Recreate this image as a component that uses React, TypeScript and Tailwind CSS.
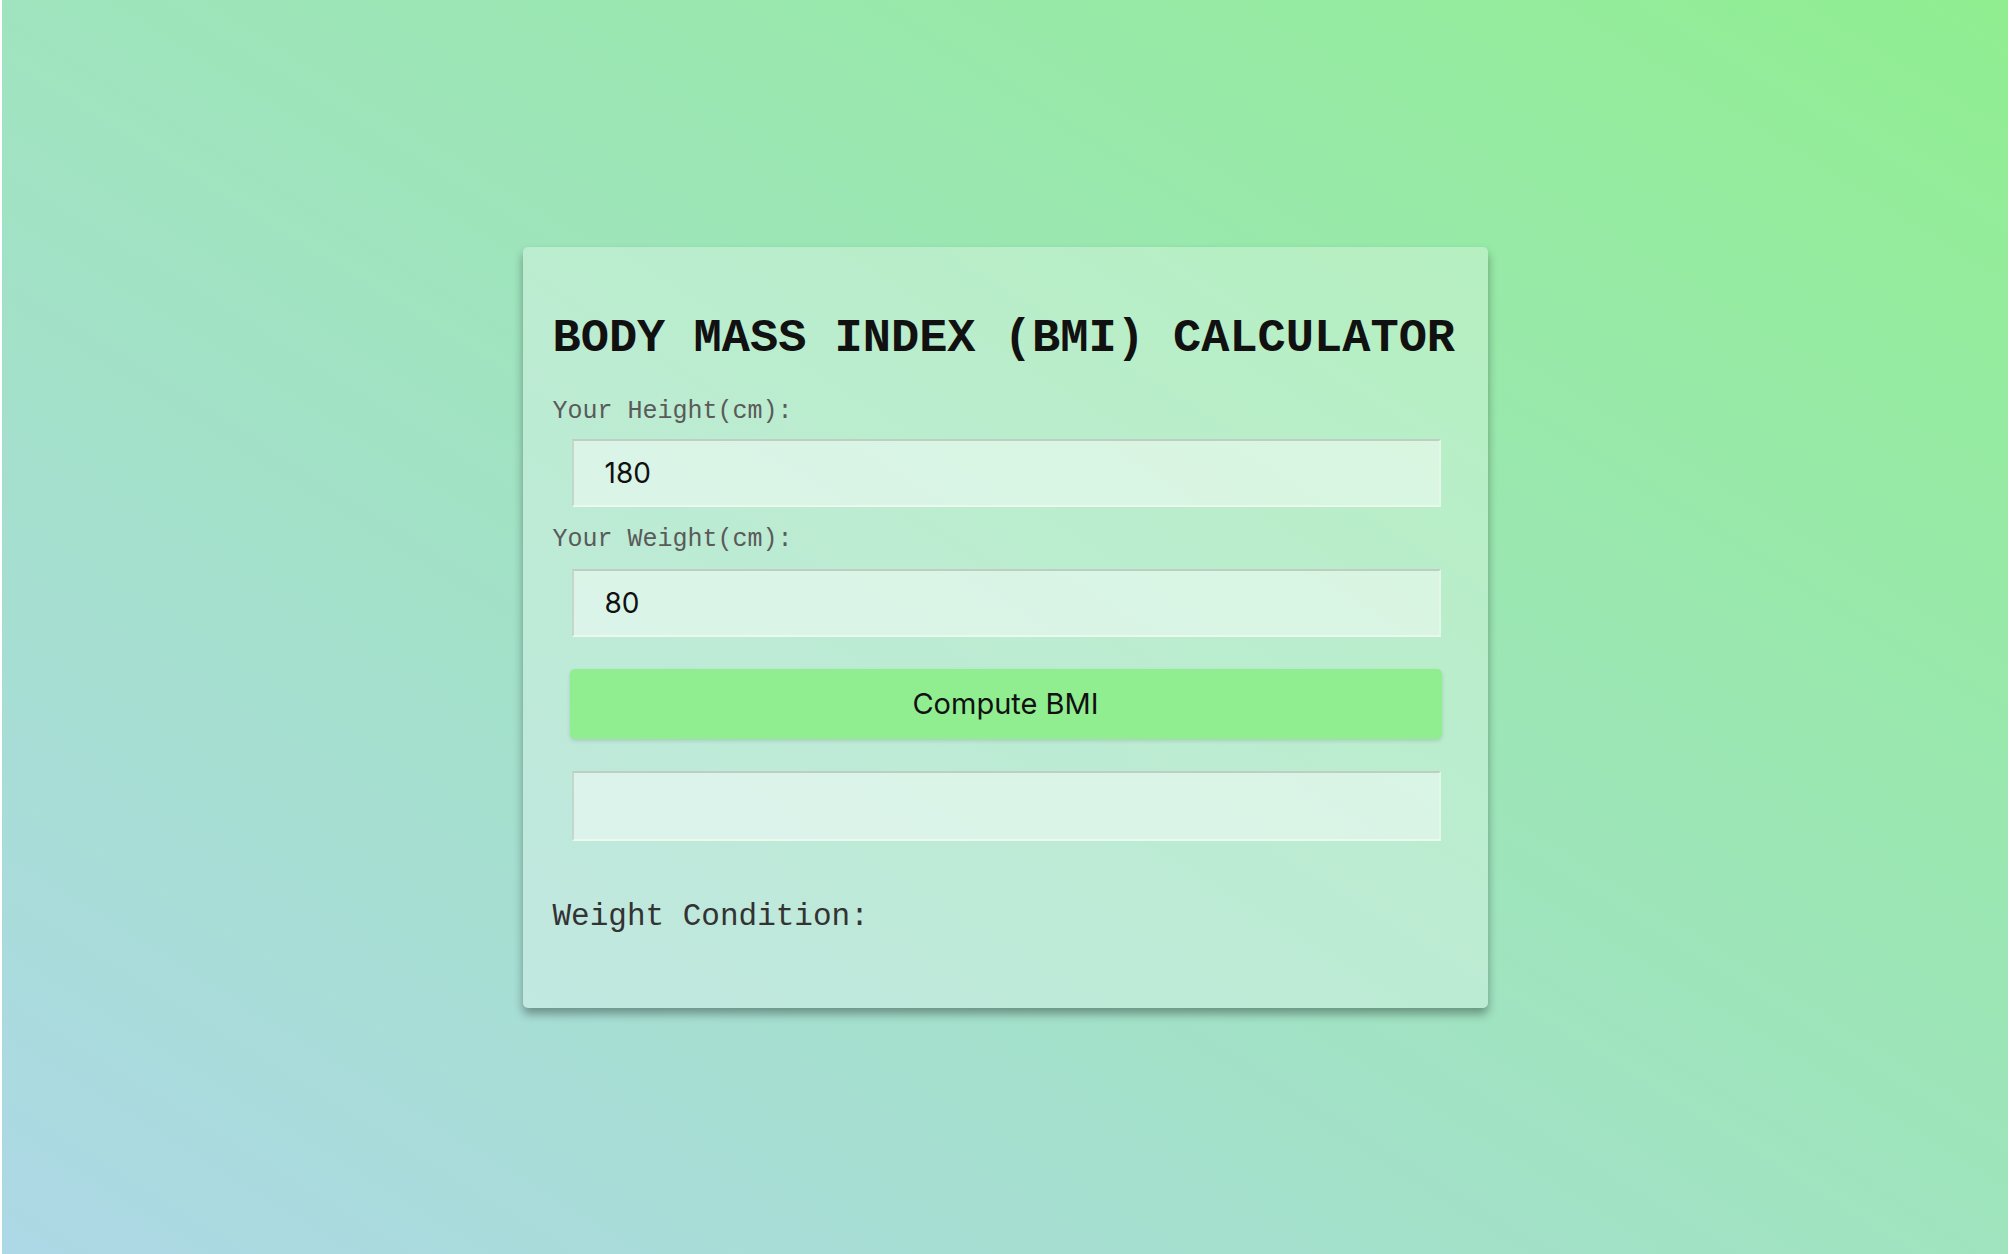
import React, { useState } from 'react';

// BMI calculator card on a blue-green gradient
const mono = "font-['Liberation_Mono','Courier_New',monospace]";
const sans = "font-['Inter','Liberation_Sans',sans-serif]";

const inputCls =
  `ml-[19px] w-[869px] h-[68px] pl-[31px] bg-white/45 border-2 border-t-[#bccfc2] border-l-[#c4d7ca] border-b-[#eaf8ee] border-r-[#e4f5e9] outline-none text-[28px] text-[#111] ${sans}`;

export default function App() {
  const [height, setHeight] = useState('180');
  const [weight, setWeight] = useState('80');
  const [result, setResult] = useState('');
  const [condition, setCondition] = useState('');

  const compute = () => {
    const h = parseFloat(height) / 100;
    const w = parseFloat(weight);
    if (!h || !w) return;
    const bmi = w / (h * h);
    setResult(bmi.toFixed(2));
    setCondition(
      bmi < 18.5 ? 'Underweight' : bmi < 25 ? 'Normal' : bmi < 30 ? 'Overweight' : 'Obese'
    );
  };

  return (
    <div className="bg-white px-[2px]">
      <div className="min-h-[1254px] flex items-center justify-center bg-gradient-to-tr from-[#add8e6] to-[#90ee90]">
        <div className="w-[965px] rounded-[5px] bg-white/30 shadow-[0_6px_10px_rgba(0,0,0,0.35)] pt-[64px] px-[30px] pb-[73px] flex flex-col">
          <h1 className={`${mono} font-bold text-[47px] leading-[56px] text-[#111] whitespace-nowrap`}>
            BODY MASS INDEX (BMI) CALCULATOR
          </h1>

          <label className={`${mono} mt-[30px] text-[25px] leading-[30px] text-[#5a5a5a]`}>Your Height(cm):</label>
          <input className={`${inputCls} mt-[12px]`} value={height} onChange={(e) => setHeight(e.target.value)} />

          <label className={`${mono} mt-[18px] text-[25px] leading-[30px] text-[#5a5a5a]`}>Your Weight(cm):</label>
          <input className={`${inputCls} mt-[14px]`} value={weight} onChange={(e) => setWeight(e.target.value)} />

          <button
            onClick={compute}
            className={`${sans} ml-[17px] w-[872px] h-[70px] mt-[32px] rounded-[5px] bg-[#90ee90] shadow-[0_2px_4px_rgba(0,0,0,0.12)] text-[29px] text-[#111]`}
          >
            Compute BMI
          </button>

          <input className={`${inputCls} mt-[32px] h-[70px]`} value={result} readOnly />

          <p className={`${mono} mt-[58px] text-[31px] leading-[36px] text-[#333]`}>
            Weight Condition: {condition}
          </p>
        </div>
      </div>
    </div>
  );
}
